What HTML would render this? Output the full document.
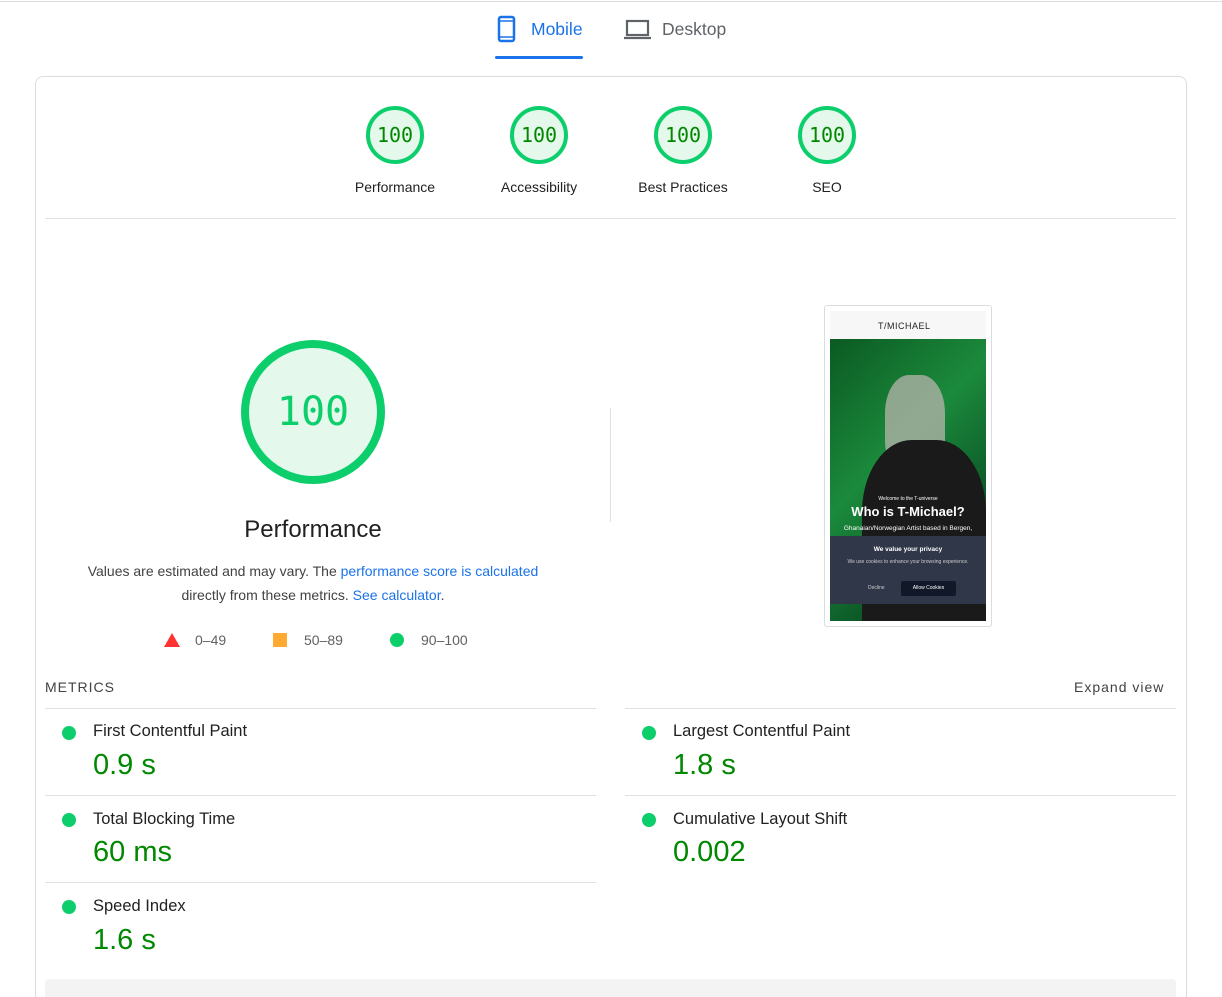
<!DOCTYPE html>
<html><head><meta charset="utf-8"><style>
*{margin:0;padding:0;box-sizing:border-box}
html,body{width:1222px;height:997px;overflow:hidden}
body{background:#fff;font-family:"Liberation Sans",Arial,sans-serif;position:relative;color:#212121}
.a{position:absolute}
.g{position:absolute;border-radius:50%;background:#e5f8ec;border:4px solid #0cce6b;display:flex;align-items:center;justify-content:center;font-family:"DejaVu Sans Mono","Liberation Mono",monospace;color:#008800}
.lbl{position:absolute;font-size:14px;color:#212121;text-align:center;width:140px}
.dot{position:absolute;width:14px;height:14px;border-radius:50%;background:#0cce6b}
.mt{position:absolute;font-size:16.5px;color:#212121}
.mv{position:absolute;font-size:29px;color:#008800}
.hr{position:absolute;height:1px;background:#e0e0e0}
</style></head><body>
<div class="a" style="left:0;top:1px;width:1222px;height:1px;background:#dadce0"></div>
<svg class="a" style="left:497px;top:15px" width="22" height="28" viewBox="0 0 22 28"><rect x="2" y="2" width="15" height="24" rx="2" fill="none" stroke="#1a73e8" stroke-width="2.5"/><line x1="3" y1="6" x2="16" y2="6" stroke="#1a73e8" stroke-width="1.5"/><line x1="3" y1="22" x2="16" y2="22" stroke="#1a73e8" stroke-width="1.5"/></svg>
<div class="a" style="left:531px;top:19px;font-size:17.5px;color:#1a73e8">Mobile</div>
<div class="a" style="left:495px;top:56px;width:88px;height:3px;background:#1a73e8;border-radius:2px"></div>
<svg class="a" style="left:624px;top:19px" width="28" height="22" viewBox="0 0 28 22"><rect x="3" y="2" width="21" height="14" fill="none" stroke="#5f6368" stroke-width="2.2"/><line x1="0" y1="19" x2="27" y2="19" stroke="#5f6368" stroke-width="2.2"/></svg>
<div class="a" style="left:662px;top:19px;font-size:17.5px;color:#5f6368">Desktop</div>
<div class="a" style="left:35px;top:76px;width:1152px;height:940px;border:1px solid #dadce0;border-radius:8px"></div>
<div class="g" style="left:366px;top:106px;width:58px;height:58px;font-size:20px">100</div>
<div class="g" style="left:510px;top:106px;width:58px;height:58px;font-size:20px">100</div>
<div class="g" style="left:654px;top:106px;width:58px;height:58px;font-size:20px">100</div>
<div class="g" style="left:798px;top:106px;width:58px;height:58px;font-size:20px">100</div>
<div class="lbl" style="left:325px;top:179px">Performance</div>
<div class="lbl" style="left:469px;top:179px">Accessibility</div>
<div class="lbl" style="left:613px;top:179px">Best Practices</div>
<div class="lbl" style="left:757px;top:179px">SEO</div>
<div class="hr" style="left:45px;top:218px;width:1131px"></div>
<div class="g" style="left:241px;top:340px;width:144px;height:144px;border-width:8px;font-size:40px;color:#0cce6b">100</div>
<div class="a" style="left:163px;top:516px;width:300px;text-align:center;font-size:24px;color:#212121">Performance</div>
<div class="a" style="left:63px;top:559px;width:500px;text-align:center;font-size:14px;line-height:24px;color:#424242">Values are estimated and may vary. The <span style="color:#1a73e8">performance score is calculated</span><br>directly from these metrics. <span style="color:#1a73e8">See calculator</span>.</div>
<svg class="a" style="left:164px;top:633px" width="16" height="14"><polygon points="8,0 16,14 0,14" fill="#ff3333"/></svg>
<div class="a" style="left:195px;top:632px;font-size:14px;color:#616161">0–49</div>
<div class="a" style="left:273px;top:633px;width:14px;height:14px;background:#ffaa33"></div>
<div class="a" style="left:304px;top:632px;font-size:14px;color:#616161">50–89</div>
<div class="dot" style="left:390px;top:633px"></div>
<div class="a" style="left:421px;top:632px;font-size:14px;color:#616161">90–100</div>
<div class="a" style="left:610px;top:408px;width:1px;height:114px;background:#e0e0e0"></div>
<div class="a" style="left:824px;top:305px;width:168px;height:322px;border:1px solid #dadce0;border-radius:3px;background:#fff"></div>
<div class="a" style="left:830px;top:311px;width:156px;height:28px;background:#f7f7f7"></div>
<div class="a" style="left:878px;top:321px;font-size:9px;letter-spacing:0.5px;color:#222">T/MICHAEL</div>
<div class="a" style="left:830px;top:339px;width:156px;height:282px;background:linear-gradient(135deg,#0b5a22,#1b8a3c 40%,#0d5a28 70%,#06301a)"></div>
<div class="a" style="left:885px;top:375px;width:60px;height:95px;border-radius:40% 40% 30% 30%;background:#b8b4ad;opacity:.75"></div>
<div class="a" style="left:862px;top:440px;width:124px;height:181px;border-radius:40% 40% 0 0;background:#1a1a1a"></div>
<div class="a" style="left:830px;top:496px;width:156px;text-align:center;font-size:5px;color:#fff">Welcome to the T-universe</div>
<div class="a" style="left:830px;top:504px;width:156px;text-align:center;font-size:13px;font-weight:bold;color:#fff">Who is T-Michael?</div>
<div class="a" style="left:830px;top:525px;width:156px;text-align:center;font-size:6.5px;color:#fff">Ghanaian/Norwegian Artist based in Bergen,</div>
<div class="a" style="left:830px;top:536px;width:156px;height:68px;background:#2f3748"></div>
<div class="a" style="left:830px;top:546px;width:156px;text-align:center;font-size:6.5px;font-weight:bold;color:#fff">We value your privacy</div>
<div class="a" style="left:845px;top:558px;width:126px;text-align:center;font-size:5px;line-height:9px;color:#ccc">We use cookies to enhance your browsing experience.</div>
<div class="a" style="left:868px;top:585px;font-size:5px;color:#ccc">Decline</div>
<div class="a" style="left:901px;top:581px;width:55px;height:15px;background:#111827;border-radius:2px;color:#fff;font-size:5px;text-align:center;line-height:15px">Allow Cookies</div>
<div class="a" style="left:45px;top:679px;font-size:14px;letter-spacing:1px;color:#424242">METRICS</div>
<div class="a" style="left:1074px;top:679px;font-size:14px;letter-spacing:1px;color:#424242">Expand view</div>
<div class="hr" style="left:45px;top:708px;width:551px"></div>
<div class="hr" style="left:625px;top:708px;width:551px"></div>
<div class="hr" style="left:45px;top:795px;width:551px"></div>
<div class="hr" style="left:625px;top:795px;width:551px"></div>
<div class="hr" style="left:45px;top:882px;width:551px"></div>
<div class="dot" style="left:62px;top:726px"></div><div class="mt" style="left:93px;top:722px">First Contentful Paint</div><div class="mv" style="left:93px;top:749px">0.9 s</div>
<div class="dot" style="left:642px;top:726px"></div><div class="mt" style="left:673px;top:722px">Largest Contentful Paint</div><div class="mv" style="left:673px;top:749px">1.8 s</div>
<div class="dot" style="left:62px;top:813px"></div><div class="mt" style="left:93px;top:810px">Total Blocking Time</div><div class="mv" style="left:93px;top:836px">60 ms</div>
<div class="dot" style="left:642px;top:813px"></div><div class="mt" style="left:673px;top:810px">Cumulative Layout Shift</div><div class="mv" style="left:673px;top:836px">0.002</div>
<div class="dot" style="left:62px;top:900px"></div><div class="mt" style="left:93px;top:897px">Speed Index</div><div class="mv" style="left:93px;top:924px">1.6 s</div>
<div class="a" style="left:45px;top:979px;width:1131px;height:30px;background:#f3f3f3;border-radius:4px"></div>
</body></html>
